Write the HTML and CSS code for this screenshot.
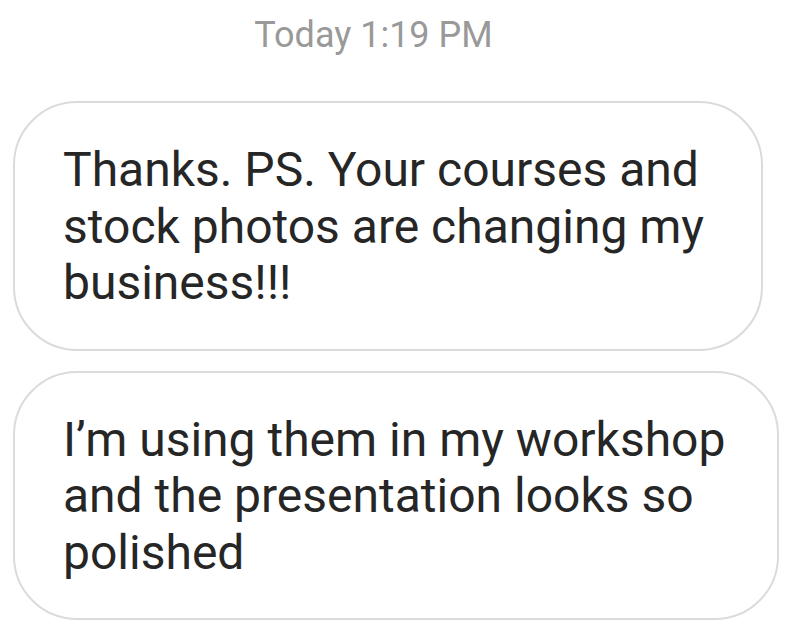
FILE: index.html
```html
<!DOCTYPE html>
<html lang="en">
<head>
    <meta charset="UTF-8">
    <meta name="viewport" content="width=device-width, initial-scale=1.0">
    <title>Messages</title>
    <link rel="stylesheet" href="styles.css">
</head>
<body>
    <div class="thread">
        <div class="timestamp">Today 1:19 PM</div>

        <div class="messages">
            <div class="bubble bubble-first">
                Thanks. PS. Your courses and stock photos are changing my business!!!
            </div>
            <div class="bubble bubble-second">
                I’m using them in my workshop and the presentation looks so polished
            </div>
        </div>
    </div>
</body>
</html>
```

FILE: styles.css
```css
* {
    margin: 0;
    padding: 0;
    box-sizing: border-box;
}

body {
    font-family: Roboto, 'Noto Sans', sans-serif;
    background: #ffffff;
    color: #262626;
}

.thread {
    padding: 0 13px;
}

.timestamp {
    text-align: center;
    font-size: 36px;
    line-height: 42px;
    color: #999999;
    padding-top: 14px;
    padding-right: 51px;
}

.messages {
    display: flex;
    flex-direction: column;
    align-items: flex-start;
    gap: 20px;
    margin-top: 45px;
}

.bubble {
    border: 2px solid #dbdbdb;
    border-radius: 64px;
    padding: 39px 40px 37px 48px;
    font-size: 48px;
    line-height: 56.5px;
}

.bubble-first {
    width: 750px;
}

.bubble-second {
    width: 766px;
}
```
